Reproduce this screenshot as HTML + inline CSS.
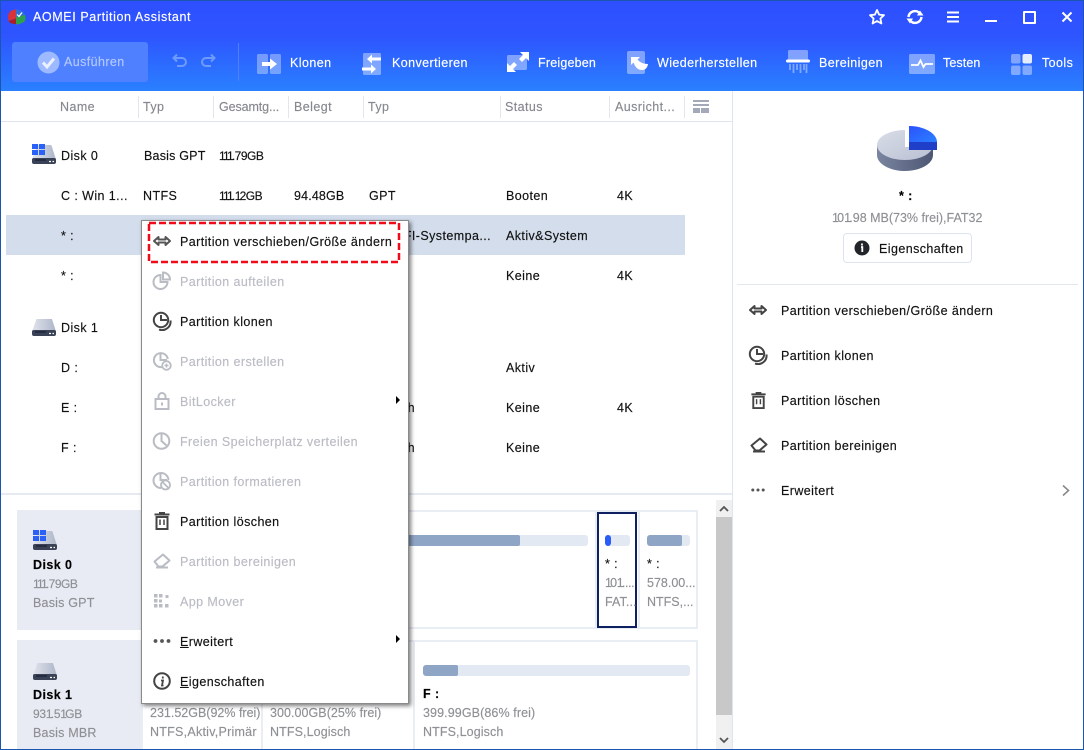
<!DOCTYPE html>
<html lang="de"><head><meta charset="utf-8"><title>AOMEI Partition Assistant</title>
<style>
html,body{margin:0;padding:0;width:1084px;height:750px;overflow:hidden;background:#fff}
body{position:relative;font-family:"Liberation Sans",sans-serif;font-size:12.5px;letter-spacing:.42px;color:#111;-webkit-text-stroke:.15px currentColor}
.a,.t,svg.i{position:absolute}
.t{line-height:16px;height:16px;white-space:nowrap}
.h{color:#fff}.g{color:#8e9094}.d{color:#babcc4}.hd{color:#85888e}
.b{font-weight:bold}
.n{font-size:12px;letter-spacing:-.5px}
.o{letter-spacing:-1.8px}
.sep{position:absolute;top:96px;width:1px;height:22px;background:#e3e6ee}
u{text-decoration:underline}
</style></head><body>
<svg width="0" height="0" style="position:absolute">
<defs>
<linearGradient id="dg" x1="0" y1="0" x2="1" y2="0"><stop offset="0" stop-color="#dfe3ec"/><stop offset="1" stop-color="#aeb6c8"/></linearGradient>
<linearGradient id="pt" x1="0" y1="0" x2="1" y2="1"><stop offset="0" stop-color="#d9dde8"/><stop offset="1" stop-color="#b9c0d2"/></linearGradient>
<linearGradient id="ps" x1="0" y1="0" x2="1" y2="0"><stop offset="0" stop-color="#7a85a0"/><stop offset="1" stop-color="#4d5775"/></linearGradient>
<linearGradient id="pb" x1="0" y1="0" x2="1" y2="1"><stop offset="0" stop-color="#2c52ff"/><stop offset="1" stop-color="#2a80ff"/></linearGradient>
<symbol id="mv" viewBox="0 0 20 20"><path d="M2 10 6.500 6V8.500H13.500V6L18 10 13.500 14V11.500H6.500V14Z" fill="none" stroke="currentColor" stroke-width="2" stroke-linejoin="round"/></symbol>
<symbol id="split" viewBox="0 0 20 20"><path d="M8.500 4A7 7 0 1 0 15.500 11H8.500Z" fill="none" stroke="currentColor" stroke-width="2"/><path d="M11 1.500A7 7 0 0 1 18 8.500H11Z" fill="none" stroke="currentColor" stroke-width="2"/></symbol>
<symbol id="clone" viewBox="0 0 20 20"><circle cx="9" cy="9" r="7.200" fill="none" stroke="currentColor" stroke-width="2"/><path d="M9 4V9H15" fill="none" stroke="currentColor" stroke-width="2"/><path d="M18.500 9.500A8.500 8.500 0 0 1 7 18.500" fill="none" stroke="currentColor" stroke-width="2"/></symbol>
<symbol id="create" viewBox="0 0 20 20"><path d="M10 16A7 7 0 1 1 15.800 8" fill="none" stroke="currentColor" stroke-width="2"/><path d="M8.500 2V9H15" fill="none" stroke="currentColor" stroke-width="2"/><circle cx="14.500" cy="14.500" r="4.300" fill="none" stroke="currentColor" stroke-width="1.800"/><path d="M12.500 14.500h4M14.500 12.500v4" stroke="currentColor" stroke-width="1.500"/></symbol>
<symbol id="lock" viewBox="0 0 20 20"><rect x="3.500" y="8" width="13" height="10" fill="none" stroke="currentColor" stroke-width="2"/><path d="M6.500 8V5.500a3.500 3.500 0 0 1 7 0V8" fill="none" stroke="currentColor" stroke-width="2"/><rect x="9" y="11.500" width="2" height="3" fill="currentColor"/></symbol>
<symbol id="clock" viewBox="0 0 20 20"><circle cx="9.500" cy="10" r="7.800" fill="none" stroke="currentColor" stroke-width="2"/><path d="M9.500 3V10L14.500 14.500" fill="none" stroke="currentColor" stroke-width="2"/></symbol>
<symbol id="format" viewBox="0 0 20 20"><path d="M9 17A7.500 7.500 0 1 1 16.500 9" fill="none" stroke="currentColor" stroke-width="2"/><path d="M8.500 2V9H15" fill="none" stroke="currentColor" stroke-width="2"/><circle cx="13.500" cy="14" r="4.500" fill="none" stroke="currentColor" stroke-width="1.800"/><path d="M10.500 11 16.500 17" stroke="currentColor" stroke-width="1.800"/></symbol>
<symbol id="trash" viewBox="0 0 20 20"><path d="M2.500 3.500H17.500M7 2H13" stroke="currentColor" stroke-width="2"/><path d="M4.500 6H15.500V18H4.500Z" fill="none" stroke="currentColor" stroke-width="2"/><path d="M8 8.500V14M12 8.500V14" stroke="currentColor" stroke-width="1.500"/></symbol>
<symbol id="eraser" viewBox="0 0 20 20"><path d="M2.500 10.500 11 3.500 17.500 9.500 10.500 15.500H6.500Z" fill="none" stroke="currentColor" stroke-width="2" stroke-linejoin="round"/><path d="M4 16.500H16" stroke="currentColor" stroke-width="2"/></symbol>
<symbol id="app" viewBox="0 0 20 20"><path d="M2 3h3.500v3.500H2zM7 3h3.500v3.500H7zM13.500 4h3v3h-3zM2 8h3.500v3.500H2zM7 8.500h3v3H7zM2 13h3.500v3.500H2zM7 13h3.500v3.500H7zM13 13h3.500v3.500H13z" fill="currentColor"/></symbol>
<symbol id="dots" viewBox="0 0 20 20"><circle cx="3.500" cy="10" r="1.900" fill="currentColor"/><circle cx="10" cy="10" r="1.900" fill="currentColor"/><circle cx="16.500" cy="10" r="1.900" fill="currentColor"/></symbol>
<symbol id="info" viewBox="0 0 20 20"><circle cx="10" cy="10" r="7.800" fill="none" stroke="currentColor" stroke-width="2"/><path d="M10.800 5.500v2M9 9.500h2L10 14.500h1.500" fill="none" stroke="currentColor" stroke-width="1.800"/></symbol>
<symbol id="disk" viewBox="0 0 24 20"><path d="M5 1.500Q5.300 1 6 1H18.500Q19.300 1 19.500 1.500L23.800 15H.2Z" fill="url(#dg)"/><path d="M0 15.500Q0 14 2 14H22Q24 14 24 15.500V18Q24 20 22 20H2Q0 20 0 18Z" fill="#3a4257"/><path d="M3 16H14" stroke="#20263a" stroke-width="1.500"/><path d="M17 17.500h2M20.500 17.500h1.500" stroke="#fff" stroke-width="1.200"/></symbol>
<symbol id="win" viewBox="0 0 13 11"><path d="M0 0H6V5H0ZM7 0H13V5H7ZM0 6H6V11H0ZM7 6H13V11H7Z" fill="#2a62f8"/></symbol>
</defs></svg>

<!-- Header -->
<div class="a" style="left:0;top:0;width:1084px;height:91px;background:linear-gradient(#2e4fff 0,#2e55ff 40%,#2a80ff 100%)"></div>
<svg class="i" style="left:7px;top:8px" width="20" height="18" viewBox="0 0 20 18"><path d="M1 8Q2 2 9 1.500V8L9 10.500 1.500 13Z" fill="#d8323a"/><path d="M1.500 13 9 10.500V16Q3 16 1.500 13Z" fill="#a81f28"/><path d="M9 1.500Q16 1.500 18 7L9 9Z" fill="#2f6fd8"/><path d="M9 9 18 7Q19 10 18 13Q15 16 9 16.500Z" fill="#2da24e"/><path d="M10 6.500 12 8.500 15 4.500" stroke="#fff" stroke-width="1.200" fill="none"/></svg>
<div class="t h" style="left:33px;top:9px;letter-spacing:.6px">AOMEI Partition Assistant</div>

<!-- Window controls -->
<svg class="i" style="left:868px;top:8px" width="18" height="18" viewBox="0 0 18 18"><path d="M9 2 11.100 6.600 16 7.200 12.400 10.500 13.400 15.500 9 13 4.600 15.500 5.600 10.500 2 7.200 6.900 6.600Z" fill="none" stroke="#fff" stroke-width="1.800" stroke-linejoin="round"/></svg>
<svg class="i" style="left:906px;top:8px" width="18" height="18" viewBox="0 0 18 18"><path d="M2.500 9A6.500 6.500 0 0 1 13 4.500" fill="none" stroke="#fff" stroke-width="2.400"/><path d="M15.500 9A6.500 6.500 0 0 1 5 13.500" fill="none" stroke="#fff" stroke-width="2.400"/><path d="M11 7.500H17.500L14 2.500ZM7 10.500H.5L4 15.500Z" fill="#fff"/></svg>
<svg class="i" style="left:946px;top:10px" width="14" height="14" viewBox="0 0 14 14"><path d="M1 2.500H13M1 7H13M1 11.500H13" stroke="#fff" stroke-width="2"/></svg>
<div class="a" style="left:985px;top:20px;width:12px;height:2px;background:#fff"></div>
<div class="a" style="left:1023px;top:11px;width:9px;height:9px;border:2px solid #fff;border-radius:1px"></div>
<svg class="i" style="left:1061px;top:11px" width="12" height="12" viewBox="0 0 12 12"><path d="M1.500 1.500 10.500 10.500M10.500 1.500 1.500 10.500" stroke="#fff" stroke-width="2"/></svg>

<!-- Toolbar -->
<div class="a" style="left:12px;top:42px;width:136px;height:40px;background:#4f80ff;border-radius:3px"></div>
<svg class="i" style="left:37px;top:51px" width="23" height="23" viewBox="0 0 23 23"><circle cx="11.500" cy="11.500" r="11" fill="#9db9ff"/><path d="M6 11.500 10 16 17 7.500" fill="none" stroke="#eaf0ff" stroke-width="3"/></svg>
<div class="t" style="left:64px;top:54px;color:#b4c8ff;letter-spacing:.4px">Ausführen</div>
<svg class="i" style="left:172px;top:53px" width="44" height="16" viewBox="0 0 44 16"><path d="M2 5H10A4 4 0 0 1 10 13H5M5 1.500 1.500 5 5 8.500" fill="none" stroke="#6f9bff" stroke-width="2"/><path d="M42 5H34A4 4 0 0 0 34 13H39M39 1.500 42.500 5 39 8.500" fill="none" stroke="#6f9bff" stroke-width="2"/></svg>
<div class="a" style="left:238px;top:43px;width:1px;height:38px;background:#4f7fff"></div>

<svg class="i" style="left:257px;top:53px" width="25" height="22" viewBox="0 0 25 22"><rect x="0" y="1" width="11" height="20" rx="1.500" fill="#fff" opacity=".35"/><rect x="13" y="1" width="11" height="20" rx="1.500" fill="#fff" opacity=".35"/><path d="M5 9H13V5.500L20 11 13 16.500V13H5Z" fill="#fff"/></svg>
<div class="t h" style="left:290px;top:55px">Klonen</div>

<svg class="i" style="left:361px;top:52px" width="22" height="24" viewBox="0 0 22 24"><rect x="2" y="1" width="18" height="22" rx="1.500" fill="#fff" opacity=".4"/><path d="M20 5.500H11V2.500L6 7 11 11.500V8.500H20ZM1 15.500H10V12.500L15 17 10 21.500V18.500H1Z" fill="#fff"/></svg>
<div class="t h" style="left:392px;top:55px">Konvertieren</div>

<svg class="i" style="left:506px;top:51px" width="24" height="22" viewBox="0 0 24 22"><rect x="1" y="4" width="20" height="15" rx="1.500" fill="#fff" opacity=".4"/><path d="M14 1H23V10L20 7 16 11 13 8 17 4ZM10 21H1V12L4 15 8 11 11 14 7 18Z" fill="#fff"/></svg>
<div class="t h" style="left:538px;top:55px;letter-spacing:.2px">Freigeben</div>

<svg class="i" style="left:627px;top:50px" width="24" height="25" viewBox="0 0 24 25"><rect x="0" y="1" width="18" height="23" rx="2" fill="#fff" opacity=".4"/><path d="M4 7H13L10.500 9.500Q14 14 21 14Q20 20 15 20Q9 20 6.500 12.500L4 15Z" fill="#fff"/></svg>
<div class="t h" style="left:657px;top:55px">Wiederherstellen</div>

<svg class="i" style="left:786px;top:49px" width="24" height="26" viewBox="0 0 24 26"><rect x="2" y="1" width="20" height="11" rx="1.500" fill="#fff" opacity=".4"/><rect x="0" y="10.500" width="24" height="3" rx="1.500" fill="#fff"/><path d="M4 15V21M7.500 15V24M11 15V21M14.500 15V24M18 15V21M20.500 15V24" stroke="#fff" stroke-width="1.800" opacity=".4"/></svg>
<div class="t h" style="left:819px;top:55px">Bereinigen</div>

<svg class="i" style="left:909px;top:53px" width="26" height="22" viewBox="0 0 26 22"><rect x="0" y="1" width="26" height="20" rx="1.500" fill="#fff" opacity=".4"/><path d="M2 12H9L11.500 7.500 14.500 14 16.500 11H24" fill="none" stroke="#fff" stroke-width="1.800"/></svg>
<div class="t h" style="left:943px;top:55px;letter-spacing:.1px">Testen</div>

<svg class="i" style="left:1011px;top:53px" width="21" height="22" viewBox="0 0 21 22"><rect x="0" y="1" width="9.500" height="9.500" rx="2" fill="#fff" opacity=".4"/><rect x="11.500" y="1" width="9.500" height="9.500" rx="2" fill="#e4ecff"/><rect x="0" y="12.500" width="9.500" height="9.500" rx="2" fill="#fff" opacity=".4"/><rect x="11.500" y="12.500" width="9.500" height="9.500" rx="2" fill="#fff" opacity=".4"/></svg>
<div class="t h" style="left:1042px;top:55px">Tools</div>

<!-- Column headers -->
<div class="a" style="left:0;top:121px;width:732px;height:1px;background:#dfe4ee"></div>
<div class="sep" style="left:138px"></div><div class="sep" style="left:213px"></div><div class="sep" style="left:288px"></div><div class="sep" style="left:363px"></div><div class="sep" style="left:500px"></div><div class="sep" style="left:609px"></div><div class="sep" style="left:684px"></div>
<div class="t hd" style="left:60px;top:99px">Name</div>
<div class="t hd" style="left:143px;top:99px">Typ</div>
<div class="t hd" style="left:219px;top:99px;letter-spacing:-.1px">Gesamtg...</div>
<div class="t hd" style="left:294px;top:99px">Belegt</div>
<div class="t hd" style="left:368px;top:99px">Typ</div>
<div class="t hd" style="left:505px;top:99px">Status</div>
<div class="t hd" style="left:615px;top:99px">Ausricht...</div>
<svg class="i" style="left:693px;top:99px" width="16" height="15" viewBox="0 0 16 15"><path d="M0 1H16V3H0ZM0 5H16V7H0ZM0 9H7V14H0ZM8 9H16V14H8Z" fill="#a3a9b8"/></svg>

<div class="a" style="left:732px;top:91px;width:1px;height:659px;background:#dfe4ee"></div>

<!-- Rows -->
<div class="a" style="left:6px;top:215px;width:679px;height:40px;background:#d3ddec"></div>
<svg class="i" style="left:32px;top:144px" width="24" height="20"><use href="#disk"/></svg>
<svg class="i" style="left:32px;top:144px" width="13" height="11"><use href="#win"/></svg>
<div class="t" style="left:61px;top:148px">Disk 0</div>
<div class="t" style="left:144px;top:148px;letter-spacing:.2px">Basis GPT</div>
<div class="t n" style="left:219px;top:148px"><span class="o">111</span>.79GB</div>
<div class="t" style="left:61px;top:188px">C : Win 1...</div>
<div class="t" style="left:143px;top:188px">NTFS</div>
<div class="t n" style="left:219px;top:188px"><span class="o">111</span>.<span class="o">1</span>2GB</div>
<div class="t" style="left:294px;top:188px;letter-spacing:.15px">94.48GB</div>
<div class="t" style="left:369px;top:188px">GPT</div>
<div class="t" style="left:506px;top:188px">Booten</div>
<div class="t" style="left:617px;top:188px">4K</div>
<div class="t" style="left:61px;top:228px">* :</div>
<div class="t" style="right:593px;top:228px">GPT,EFI-Systempa...</div>
<div class="t" style="left:506px;top:228px">Aktiv&amp;System</div>
<div class="t" style="left:61px;top:268px">* :</div>
<div class="t" style="left:506px;top:268px">Keine</div>
<div class="t" style="left:617px;top:268px">4K</div>
<svg class="i" style="left:32px;top:319px" width="24" height="17" viewBox="0 3 24 17"><use href="#disk" width="24" height="20"/></svg>
<div class="t" style="left:61px;top:320px">Disk 1</div>
<div class="t" style="left:61px;top:360px">D :</div>
<div class="t" style="left:506px;top:360px">Aktiv</div>
<div class="t" style="left:61px;top:400px">E :</div>
<div class="t" style="right:669px;top:400px">GPT,Logisch</div>
<div class="t" style="left:506px;top:400px">Keine</div>
<div class="t" style="left:617px;top:400px">4K</div>
<div class="t" style="left:61px;top:440px">F :</div>
<div class="t" style="right:669px;top:440px">GPT,Logisch</div>
<div class="t" style="left:506px;top:440px">Keine</div>

<!-- Bottom panel -->
<div class="a" style="left:0;top:493px;width:732px;height:2px;background:#e6eaf3"></div>
<div class="a" style="left:17px;top:510px;width:130px;height:120px;background:#e8ebf3"></div>
<div class="a" style="left:17px;top:640px;width:125px;height:110px;background:#e8ebf3"></div>
<svg class="i" style="left:33px;top:530px" width="24" height="20"><use href="#disk"/></svg>
<svg class="i" style="left:33px;top:530px" width="13" height="11"><use href="#win"/></svg>
<div class="t b" style="left:33px;top:557px;color:#000">Disk 0</div>
<div class="t g n" style="left:33px;top:576px"><span class="o">111</span>.79GB</div>
<div class="t g" style="left:33px;top:595px;letter-spacing:.2px">Basis GPT</div>
<svg class="i" style="left:33px;top:663px" width="24" height="17" viewBox="0 3 24 17"><use href="#disk" width="24" height="20"/></svg>
<div class="t b" style="left:33px;top:687px;color:#000">Disk 1</div>
<div class="t g n" style="left:33px;top:706px;letter-spacing:-.25px">93<span class="o">1</span>.5<span class="o">1</span>GB</div>
<div class="t g" style="left:33px;top:725px;letter-spacing:.2px">Basis MBR</div>

<div class="a" style="left:141px;top:510px;width:553px;height:115px;border:2px solid #e9edf4"></div>
<div class="a" style="left:595px;top:510px;width:2px;height:119px;background:#e9edf4"></div>
<div class="a" style="left:638px;top:510px;width:2px;height:119px;background:#e9edf4"></div>
<div class="a" style="left:400px;top:535px;width:188px;height:11px;background:#e3e9f3;border-radius:3px"></div>
<div class="a" style="left:400px;top:535px;width:120px;height:11px;background:#8fa5c5;border-radius:0 2px 2px 0"></div>
<div class="a" style="left:597px;top:512px;width:36px;height:112px;border:2px solid #0f2060"></div>
<div class="a" style="left:605px;top:535px;width:25px;height:11px;background:#e3e9f3;border-radius:3px"></div>
<div class="a" style="left:605px;top:535px;width:6px;height:11px;background:#2a5cf8;border-radius:3px"></div>
<div class="t" style="left:605px;top:556px">* :</div>
<div class="t g" style="left:605px;top:575px;letter-spacing:-.4px"><span class="o">1</span>0<span class="o">1</span>....</div>
<div class="t g" style="left:605px;top:594px;letter-spacing:.1px">FAT...</div>
<div class="a" style="left:647px;top:535px;width:43px;height:11px;background:#e3e9f3;border-radius:3px"></div>
<div class="a" style="left:647px;top:535px;width:35px;height:11px;background:#8fa5c5;border-radius:3px 2px 2px 3px"></div>
<div class="t" style="left:647px;top:556px">* :</div>
<div class="t g" style="left:647px;top:575px;letter-spacing:0">578.00...</div>
<div class="t g" style="left:647px;top:594px;letter-spacing:0">NTFS,...</div>

<div class="a" style="left:141px;top:640px;width:553px;height:120px;border:2px solid #e9edf4"></div>
<div class="a" style="left:261px;top:640px;width:2px;height:110px;background:#e9edf4"></div>
<div class="a" style="left:413px;top:640px;width:2px;height:110px;background:#e9edf4"></div>
<div class="t g" style="left:150px;top:705px;letter-spacing:0">231.52GB(92% frei)</div>
<div class="t g" style="left:150px;top:724px;letter-spacing:.25px">NTFS,Aktiv,Primär</div>
<div class="t g" style="left:270px;top:705px;letter-spacing:.05px">300.00GB(25% frei)</div>
<div class="t g" style="left:270px;top:724px;letter-spacing:.1px">NTFS,Logisch</div>
<div class="a" style="left:423px;top:665px;width:267px;height:11px;background:#e3e9f3;border-radius:3px"></div>
<div class="a" style="left:423px;top:665px;width:35px;height:11px;background:#8fa5c5;border-radius:3px 2px 2px 3px"></div>
<div class="t b" style="left:423px;top:686px;color:#000">F :</div>
<div class="t g" style="left:423px;top:705px;letter-spacing:.1px">399.99GB(86% frei)</div>
<div class="t g" style="left:423px;top:724px;letter-spacing:.1px">NTFS,Logisch</div>

<!-- Scrollbar -->
<div class="a" style="left:716px;top:500px;width:16px;height:250px;background:#f0f0f0"></div>
<div class="a" style="left:716px;top:517px;width:16px;height:198px;background:#c8c8c8"></div>
<svg class="i" style="left:719px;top:505px" width="10" height="8" viewBox="0 0 10 8"><path d="M1 6 5 2 9 6" fill="none" stroke="#555" stroke-width="1.800"/></svg>
<svg class="i" style="left:719px;top:736px" width="10" height="8" viewBox="0 0 10 8"><path d="M1 2 5 6 9 2" fill="none" stroke="#555" stroke-width="1.800"/></svg>

<!-- Right panel -->
<svg class="i" style="left:875px;top:124px" width="64" height="50" viewBox="875 124 64 50">
<path d="M877 145V155C877 164 890 171 905 171S933 164 933 155V145Z" fill="url(#ps)"/>
<ellipse cx="905" cy="145" rx="28" ry="15" fill="url(#pt)"/>
<path d="M905 126H933V147H905Z" fill="#fff"/>
<path d="M909 142H937V150H909Z" fill="#1f3fc8"/>
<path d="M909 126C925 126 937 134 937 142H909Z" fill="url(#pb)"/>
</svg>
<div class="t b" style="left:899px;top:188px;color:#000">* :</div>
<div class="t g" style="left:832px;top:210px;letter-spacing:0"><span class="o">1</span>0<span class="o">1</span>.98 MB(73% frei),FAT32</div>
<div class="a" style="left:843px;top:233px;width:127px;height:28px;border:1px solid #dde3ef;border-radius:4px"></div>
<svg class="i" style="left:854px;top:240px" width="16" height="16" viewBox="0 0 16 16"><circle cx="8" cy="8" r="7.500" fill="#22242a"/><path d="M8 3.500v2M7 7H8.300V12" fill="none" stroke="#fff" stroke-width="1.800"/></svg>
<div class="t" style="left:879px;top:241px">Eigenschaften</div>
<div class="a" style="left:737px;top:284px;width:341px;height:1px;background:#e3e7f0"></div>
<svg class="i" style="left:748px;top:300px;color:#444" width="20" height="20"><use href="#mv"/></svg>
<div class="t" style="left:781px;top:303px">Partition verschieben/Größe ändern</div>
<svg class="i" style="left:748px;top:345px;color:#444" width="20" height="20"><use href="#clone"/></svg>
<div class="t" style="left:781px;top:348px">Partition klonen</div>
<svg class="i" style="left:749px;top:391px;color:#444" width="19" height="19"><use href="#trash"/></svg>
<div class="t" style="left:781px;top:393px">Partition löschen</div>
<svg class="i" style="left:749px;top:435px;color:#444" width="20" height="20"><use href="#eraser"/></svg>
<div class="t" style="left:781px;top:438px">Partition bereinigen</div>
<svg class="i" style="left:750px;top:482px;color:#555" width="16" height="16"><use href="#dots"/></svg>
<div class="t" style="left:781px;top:483px">Erweitert</div>
<svg class="i" style="left:1061px;top:484px" width="10" height="13" viewBox="0 0 10 13"><path d="M2 1.500 7.500 6.500 2 11.500" fill="none" stroke="#888" stroke-width="1.600"/></svg>

<!-- Context menu -->
<div class="a" style="left:141px;top:220px;width:266px;height:482px;background:#fff;border:1px solid #8a8a8a;box-shadow:2px 2px 4px rgba(0,0,0,.5)"></div>
<svg class="i" style="left:147px;top:221px" width="254" height="43" viewBox="0 0 254 43"><rect x="2" y="2" width="250" height="39" fill="none" stroke="#f00a1a" stroke-width="2.500" stroke-dasharray="7 3"/></svg>
<svg class="i" style="left:152px;top:231px;color:#555" width="20" height="20"><use href="#mv"/></svg>
<div class="t" style="left:180px;top:234px">Partition verschieben/Größe ändern</div>
<svg class="i" style="left:152px;top:271px;color:#babcc4" width="20" height="20"><use href="#split"/></svg>
<div class="t d" style="left:180px;top:274px">Partition aufteilen</div>
<svg class="i" style="left:152px;top:311px;color:#444" width="20" height="20"><use href="#clone"/></svg>
<div class="t" style="left:180px;top:314px">Partition klonen</div>
<svg class="i" style="left:152px;top:351px;color:#babcc4" width="20" height="20"><use href="#create"/></svg>
<div class="t d" style="left:180px;top:354px">Partition erstellen</div>
<svg class="i" style="left:152px;top:391px;color:#babcc4" width="20" height="20"><use href="#lock"/></svg>
<div class="t d" style="left:180px;top:394px">BitLocker</div>
<div class="a" style="left:396px;top:396px;width:0;height:0;border-left:4px solid #000;border-top:4px solid transparent;border-bottom:4px solid transparent"></div>
<svg class="i" style="left:152px;top:431px;color:#babcc4" width="20" height="20"><use href="#clock"/></svg>
<div class="t d" style="left:180px;top:434px">Freien Speicherplatz verteilen</div>
<svg class="i" style="left:152px;top:471px;color:#babcc4" width="20" height="20"><use href="#format"/></svg>
<div class="t d" style="left:180px;top:474px">Partition formatieren</div>
<svg class="i" style="left:152px;top:511px;color:#444" width="20" height="20"><use href="#trash"/></svg>
<div class="t" style="left:180px;top:514px">Partition löschen</div>
<svg class="i" style="left:152px;top:551px;color:#babcc4" width="20" height="20"><use href="#eraser"/></svg>
<div class="t d" style="left:180px;top:554px">Partition bereinigen</div>
<svg class="i" style="left:152px;top:591px;color:#babcc4" width="20" height="20"><use href="#app"/></svg>
<div class="t d" style="left:180px;top:594px">App Mover</div>
<svg class="i" style="left:152px;top:631px;color:#555" width="20" height="20"><use href="#dots"/></svg>
<div class="t" style="left:180px;top:634px"><u>E</u>rweitert</div>
<div class="a" style="left:396px;top:635px;width:0;height:0;border-left:4px solid #000;border-top:4px solid transparent;border-bottom:4px solid transparent"></div>
<svg class="i" style="left:152px;top:671px;color:#444" width="20" height="20"><use href="#info"/></svg>
<div class="t" style="left:180px;top:674px"><u>E</u>igenschaften</div>

<!-- Window border -->
<div class="a" style="left:0;top:0;width:1082px;height:748px;border:1px solid #1a56b0;pointer-events:none"></div>
</body></html>
